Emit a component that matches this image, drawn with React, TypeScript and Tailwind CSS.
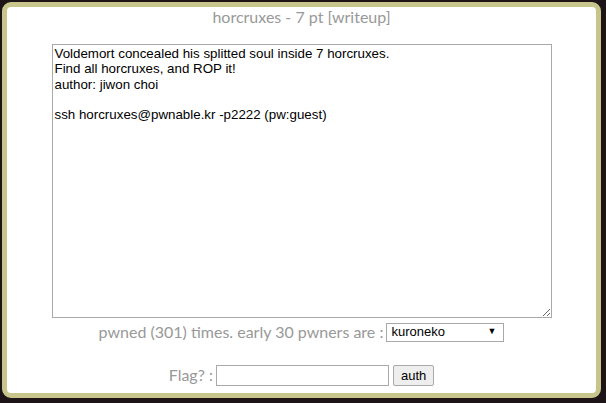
export default function App() {
  return (
    <div className="w-[606px] h-[403px] bg-[#1d1418] p-[2px] pr-[5px] pb-[5px]">
      <div
        className="h-full rounded-[9px] border-[5px] border-[#c7c58b] bg-white flex flex-col items-center text-[#999]"
        style={{ fontFamily: "Lato, sans-serif" }}
      >
        <div className="text-[16px] leading-[20px]">horcruxes - 7 pt [writeup]</div>
        <textarea
          readOnly
          className="mt-[17px] w-[500px] h-[274px] border border-[#a9a9a9] px-[2px] py-[1px] text-[13.33px] leading-[15.3px] text-black outline-none resize-y"
          style={{ fontFamily: '"Liberation Sans", Arial, sans-serif' }}
          defaultValue={
            "Voldemort concealed his splitted soul inside 7 horcruxes.\nFind all horcruxes, and ROP it!\nauthor: jiwon choi\n\nssh horcruxes@pwnable.kr -p2222 (pw:guest)"
          }
        />
        <div className="flex items-center gap-[3px] mt-[4px] h-[20px] text-[16px]">
          <span>pwned (301) times. early 30 pwners are :</span>
          <div
            className="w-[118px] h-[19px] border border-[#a9a9a9] flex items-center justify-between pl-[4px] pr-[7px] text-[13px] text-black"
            style={{ fontFamily: '"Liberation Sans", Arial, sans-serif' }}
          >
            <span>kuroneko</span>
            <span className="text-[9px]">▼</span>
          </div>
        </div>
        <div className="flex items-center gap-[3px] mt-[21px] text-[16px]">
          <span>Flag? :</span>
          <input className="w-[173px] h-[21px] border border-[#a9a9a9] outline-none" />
          <button
            className="h-[21px] px-[7px] border border-[#a9a9a9] rounded-[2px] bg-[#eee] text-black text-[13px] ml-[1px]"
            style={{ fontFamily: '"Liberation Sans", Arial, sans-serif' }}
          >
            auth
          </button>
        </div>
      </div>
    </div>
  );
}
